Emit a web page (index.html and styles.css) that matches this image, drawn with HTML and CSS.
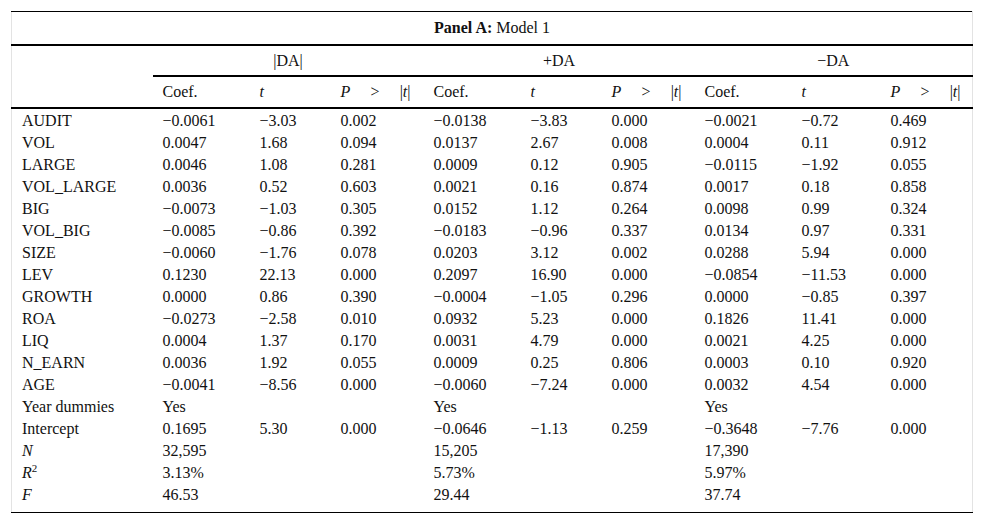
FILE: index.html
```html
<!DOCTYPE html>
<html>
<head>
<meta charset="utf-8">
<link rel="stylesheet" href="styles.css">
</head>
<body>
<div class="wrap">
<table class="tbl">
<colgroup>
<col class="c-label"><col class="c-coef"><col class="c-t"><col class="c-p">
<col class="c-coef"><col class="c-t"><col class="c-p">
<col class="c-coef"><col class="c-t3"><col class="c-p3">
</colgroup>
<thead>
<tr class="panel"><th colspan="10"><b>Panel A:</b> Model 1</th></tr>
<tr class="group"><th class="blank"></th><th colspan="3" class="gh">|DA|</th><th colspan="3" class="gh">+DA</th><th colspan="3" class="gh">−DA</th></tr>
<tr class="cols">
<th class="blank"></th>
<th>Coef.</th><th><i>t</i></th><th><span class="pt"><i>P</i><span>&gt;</span><span>|<i>t</i>|</span></span></th>
<th>Coef.</th><th><i>t</i></th><th><span class="pt"><i>P</i><span>&gt;</span><span>|<i>t</i>|</span></span></th>
<th>Coef.</th><th><i>t</i></th><th><span class="pt"><i>P</i><span>&gt;</span><span>|<i>t</i>|</span></span></th>
</tr>
</thead>
<tbody>
<tr><td>AUDIT</td><td>−0.0061</td><td>−3.03</td><td>0.002</td><td>−0.0138</td><td>−3.83</td><td>0.000</td><td>−0.0021</td><td>−0.72</td><td>0.469</td></tr>
<tr><td>VOL</td><td>0.0047</td><td>1.68</td><td>0.094</td><td>0.0137</td><td>2.67</td><td>0.008</td><td>0.0004</td><td>0.11</td><td>0.912</td></tr>
<tr><td>LARGE</td><td>0.0046</td><td>1.08</td><td>0.281</td><td>0.0009</td><td>0.12</td><td>0.905</td><td>−0.0115</td><td>−1.92</td><td>0.055</td></tr>
<tr><td>VOL_LARGE</td><td>0.0036</td><td>0.52</td><td>0.603</td><td>0.0021</td><td>0.16</td><td>0.874</td><td>0.0017</td><td>0.18</td><td>0.858</td></tr>
<tr><td>BIG</td><td>−0.0073</td><td>−1.03</td><td>0.305</td><td>0.0152</td><td>1.12</td><td>0.264</td><td>0.0098</td><td>0.99</td><td>0.324</td></tr>
<tr><td>VOL_BIG</td><td>−0.0085</td><td>−0.86</td><td>0.392</td><td>−0.0183</td><td>−0.96</td><td>0.337</td><td>0.0134</td><td>0.97</td><td>0.331</td></tr>
<tr><td>SIZE</td><td>−0.0060</td><td>−1.76</td><td>0.078</td><td>0.0203</td><td>3.12</td><td>0.002</td><td>0.0288</td><td>5.94</td><td>0.000</td></tr>
<tr><td>LEV</td><td>0.1230</td><td>22.13</td><td>0.000</td><td>0.2097</td><td>16.90</td><td>0.000</td><td>−0.0854</td><td>−11.53</td><td>0.000</td></tr>
<tr><td>GROWTH</td><td>0.0000</td><td>0.86</td><td>0.390</td><td>−0.0004</td><td>−1.05</td><td>0.296</td><td>0.0000</td><td>−0.85</td><td>0.397</td></tr>
<tr><td>ROA</td><td>−0.0273</td><td>−2.58</td><td>0.010</td><td>0.0932</td><td>5.23</td><td>0.000</td><td>0.1826</td><td>11.41</td><td>0.000</td></tr>
<tr><td>LIQ</td><td>0.0004</td><td>1.37</td><td>0.170</td><td>0.0031</td><td>4.79</td><td>0.000</td><td>0.0021</td><td>4.25</td><td>0.000</td></tr>
<tr><td>N_EARN</td><td>0.0036</td><td>1.92</td><td>0.055</td><td>0.0009</td><td>0.25</td><td>0.806</td><td>0.0003</td><td>0.10</td><td>0.920</td></tr>
<tr><td>AGE</td><td>−0.0041</td><td>−8.56</td><td>0.000</td><td>−0.0060</td><td>−7.24</td><td>0.000</td><td>0.0032</td><td>4.54</td><td>0.000</td></tr>
<tr><td>Year dummies</td><td>Yes</td><td></td><td></td><td>Yes</td><td></td><td></td><td>Yes</td><td></td><td></td></tr>
<tr><td>Intercept</td><td>0.1695</td><td>5.30</td><td>0.000</td><td>−0.0646</td><td>−1.13</td><td>0.259</td><td>−0.3648</td><td>−7.76</td><td>0.000</td></tr>
<tr><td><i>N</i></td><td>32,595</td><td></td><td></td><td>15,205</td><td></td><td></td><td>17,390</td><td></td><td></td></tr>
<tr><td><i>R</i><sup>2</sup></td><td>3.13%</td><td></td><td></td><td>5.73%</td><td></td><td></td><td>5.97%</td><td></td><td></td></tr>
<tr class="last"><td><i>F</i></td><td>46.53</td><td></td><td></td><td>29.44</td><td></td><td></td><td>37.74</td><td></td><td></td></tr>
</tbody>
</table>
</div>
</body>
</html>
```
FILE: styles.css
```css
html, body {
  margin: 0;
  padding: 0;
  background: #fff;
}
.wrap {
  padding: 11px 0 0 11px;
}
.tbl {
  border-collapse: collapse;
  table-layout: fixed;
  width: 962px;
  font-family: "Liberation Serif", "Times New Roman", serif;
  font-size: 16px;
  color: #111;
  border-left: 1px solid #e3e3e3;
  border-right: 1px solid #e3e3e3;
  border-top: 1px solid #000;
  border-bottom: 1px solid #000;
}
.c-label { width: 141px; }
.c-coef { width: 97px; }
.c-t { width: 81px; }
.c-p { width: 93px; }
.c-t3 { width: 89px; }
.c-p3 { width: 92px; }
.tbl th, .tbl td {
  padding: 0 0 0 10px;
  text-align: left;
  font-weight: normal;
  white-space: nowrap;
  vertical-align: middle;
  overflow: visible;
}
.tbl td {
  height: 22px;
  line-height: 22px;
}
.panel th {
  text-align: center;
  height: 32px;
  border-bottom: 2px solid #000;
  padding: 0;
}
.panel b { font-weight: bold; }
.group th {
  height: 29px;
}
.group .gh {
  text-align: center;
  padding: 0;
  border-bottom: 2px solid #000;
}
.cols th {
  height: 30px;
  border-bottom: 2px solid #000;
}
.pt {
  display: flex;
  justify-content: space-between;
  width: 70px;
}
.tbl sup {
  font-size: 11px;
  line-height: 0;
  vertical-align: 6px;
}
.last td {
  padding-bottom: 6px;
  height: 22px;
}
.tbl tbody tr:first-child td {
  padding-top: 1px;
}
```
